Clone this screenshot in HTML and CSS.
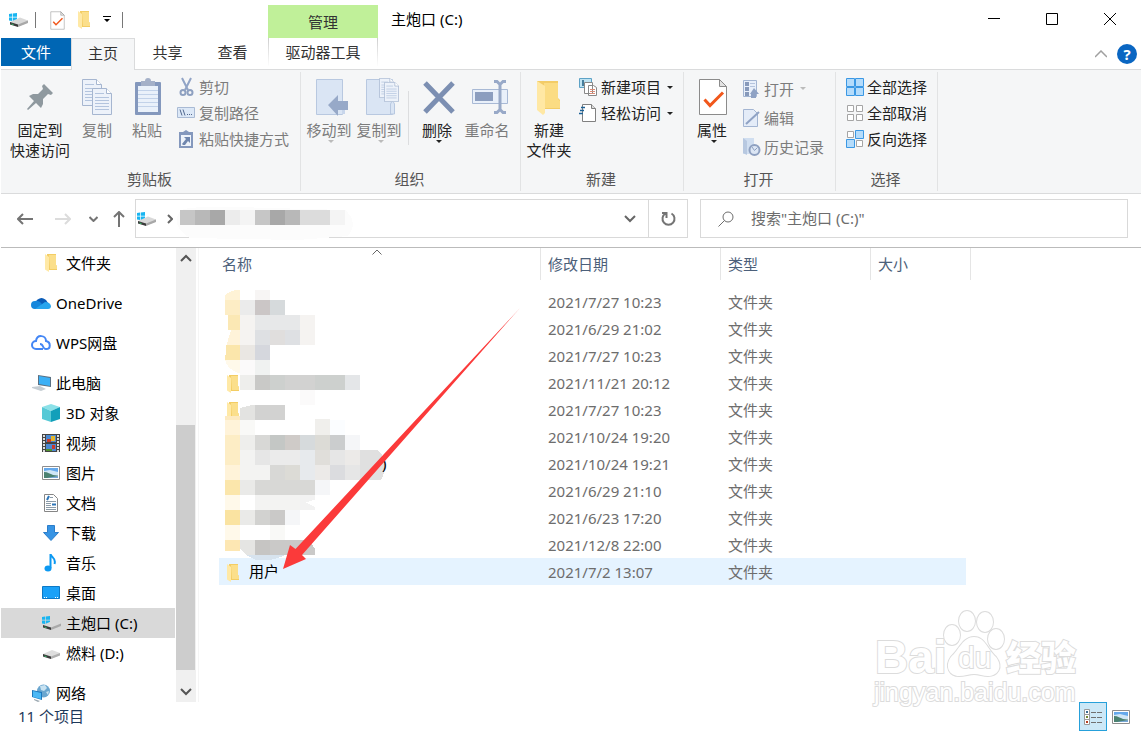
FILE: index.html
```html
<!DOCTYPE html>
<html lang="zh-CN">
<head>
  <meta charset="UTF-8">
  <meta name="viewport" content="width=device-width, initial-scale=1.0">
  <title>主炮口 (C:)</title>
  <link rel="stylesheet" href="styles.css">
</head>
<body>
  <!-- shared icons -->
  <svg class="defs" aria-hidden="true">
    <symbol id="i-drive" viewBox="0 0 20 18">
      <path fill="#19b5f1" d="M1 3l3-.5v3.300H1zM4.700 2.400L9 2v3.800H4.700zM1 6.600h3V10l-3-.5zM4.700 6.600H9v3.900l-4.300-.4z"/>
      <path fill="#d9d9d9" d="M2 11l10-4.500 8 3v2l-10 4-8-2z"/>
      <path fill="#a8a8a8" d="M10 13.500l10-4v2.500l-10 4z"/>
      <path fill="#3a3a3a" d="M2 11l8 2.500V16l-8-2.500z"/>
      <path stroke="#35c26b" d="M3.500 13l2 .6"/>
    </symbol>
    <symbol id="i-disk" viewBox="0 0 20 18">
      <path fill="#dedede" d="M2 10l9-4 8 3v2l-9 4-8-2z"/>
      <path fill="#b0b0b0" d="M10 12.500l9-3.500v2.500L10 15z"/>
      <path fill="#3a3a3a" d="M2 10l8 2.500V15l-8-2.500z"/>
      <path stroke="#35c26b" d="M3.500 12l2 .6"/>
    </symbol>
    <symbol id="i-folder" viewBox="0 0 16 18">
      <path fill="#f3cd64" d="M4 0h9v11l1 1v4H4z"/>
      <path fill="#fbdf8b" d="M6 1h7v10l1 1v3H7z"/>
      <path fill="#ffe9a6" d="M2 0l4 3v15l-4-2.500z"/>
    </symbol>
    <symbol id="i-check" viewBox="0 0 30 38">
      <path fill="#fff" stroke="#8b8b8b" d="M1.500 1.500h20l7 7v28h-27z"/>
      <path fill="#e3e3e3" stroke="#8b8b8b" d="M21.500 1.500v7h7z"/>
      <path fill="none" stroke="#f1571b" stroke-width="3" d="M6.500 21.500l5.500 6 13-13"/>
    </symbol>
    <symbol id="i-page" viewBox="0 0 20 27">
      <path fill="#edf2fa" stroke="#a6b6d0" d="M.5.5h14l5 5v21H.5z"/>
      <path fill="#fff" stroke="#a6b6d0" d="M14.500.5v5h5"/>
      <path stroke="#b3c4de" d="M3 5.500h9M3 9.500h14M3 12.500h14M3 15.500h14M3 18.500h14M3 21.500h14"/>
    </symbol>
    <symbol id="i-picture" viewBox="0 0 18 14">
      <path fill="#fff" stroke="#8d8d8d" d="M.5.5h17v13H.5z"/>
      <path fill="#65a9ec" d="M2 2h14v5H2z"/>
      <path fill="#cfe6f6" d="M2 5l6-1 8 2v3H2z"/>
      <path fill="#4b8271" d="M2 6c4 0 6 2 9 3l5 .5V12H2z"/>
      <path fill="#79a8d8" d="M5 12l11-2v2z"/>
    </symbol>
  </svg>

  <header class="titlebar">
    <div class="quick">
      <svg class="q-drive" width="20" height="18"><use href="#i-drive"/></svg>
      <i class="q-line"></i>
      <button type="button" aria-label="属性"><svg width="15" height="19"><use href="#i-check"/></svg></button>
      <button type="button" aria-label="新建文件夹"><svg width="16" height="18"><use href="#i-folder"/></svg></button>
      <button type="button" aria-label="自定义快速访问工具栏"><svg width="8" height="8" viewBox="0 0 8 8"><path d="M0 0h8v1H0zM1 3h6L4 6z"/></svg></button>
      <i class="q-line"></i>
    </div>
    <div class="context-title">管理</div>
    <div class="window-title">主炮口 (C:)</div>
    <div class="window-buttons">
      <button type="button" aria-label="最小化"><svg width="12" height="12"><path stroke="#000" d="M0 5.500h12"/></svg></button>
      <button type="button" aria-label="最大化"><svg width="12" height="12"><path fill="none" stroke="#000" d="M.5.5h11v11H.5z"/></svg></button>
      <button type="button" aria-label="关闭"><svg width="12" height="12"><path stroke="#000" d="M0 0l12 12M12 0L0 12"/></svg></button>
    </div>
  </header>

  <nav class="tabs">
    <button type="button" class="tab tab-file">文件</button>
    <button type="button" class="tab tab-active">主页</button>
    <button type="button" class="tab">共享</button>
    <button type="button" class="tab">查看</button>
    <button type="button" class="tab tab-context">驱动器工具</button>
    <div class="tabs-right">
      <button type="button" aria-label="折叠功能区"><svg width="12" height="8"><path fill="none" stroke="#a0a0a0" stroke-width="1.500" d="M0 7l6-6 6 6"/></svg></button>
      <button type="button" class="help" aria-label="帮助">?</button>
    </div>
  </nav>

  <section class="ribbon">
    <div class="group">
      <div class="group-body g-clip">
        <button type="button" class="big wide">
          <svg width="36" height="38" viewBox="0 0 36 38"><path fill="#8f999f" d="M22 6l9 9-2 2-3-1-5 5v5l-2 4-5-5-8 7-1-1 7-8-5-5 4-2h5l5-5-1-3z"/></svg>
          <span>固定到<br>快速访问</span>
        </button>
        <button type="button" class="big" disabled>
          <svg width="32" height="38"><use href="#i-page" y="1" width="20" height="27"/><use href="#i-page" x="10" y="10" width="20" height="27"/></svg>
          <span>复制</span>
        </button>
        <button type="button" class="big" disabled>
          <svg width="28" height="38" viewBox="0 0 28 38"><rect x="1" y="4" width="26" height="33" rx="1" fill="#8498bd"/><path fill="#eaf1fa" d="M4 8h20v26H4z"/><path stroke="#c2d2e9" d="M4 12.500h20M4 16.500h20M4 20.500h20M4 24.500h20M4 28.500h20"/><path fill="#a4b0c8" d="M7 3h4a3 3 0 0 1 6 0h4v5H7z"/></svg>
          <span>粘贴</span>
        </button>
        <div class="small-list">
          <button type="button" class="small" disabled>
            <svg width="20" height="20" viewBox="0 0 20 20"><path fill="none" stroke="#91a4c6" stroke-width="2" d="M5 1l6 12M14 1L8 13"/><g fill="none" stroke="#8ea0c0" stroke-width="2"><circle cx="6" cy="15.500" r="2.500"/><circle cx="13" cy="15.500" r="2.500"/></g></svg>剪切</button>
          <button type="button" class="small" disabled>
            <svg width="20" height="20" viewBox="0 0 20 20"><path fill="#dce8f7" stroke="#a9bad4" d="M.5 4.500h17v10H.5z"/><path stroke="#52698f" d="M3 6.500l2 6M6 6.500l2 6M10 11.500h1M12 11.500h1M14 11.500h1"/></svg>复制路径</button>
          <button type="button" class="small" disabled>
            <svg width="20" height="20" viewBox="0 0 20 20"><path fill="#8498bd" d="M2 3h4l3-2 3 2h4v16H2z"/><path fill="#eef3fa" d="M4 6h10v11H4z"/><path fill="#6f86ae" d="M7 8h6v6l-2-2-3 4H6l-1-1 4-5z"/></svg>粘贴快捷方式</button>
        </div>
      </div>
      <div class="group-name">剪贴板</div>
    </div>

    <div class="group">
      <div class="group-body g-organize">
        <button type="button" class="big" disabled>
          <svg width="34" height="38" viewBox="0 0 34 38"><path fill="#dae5f4" stroke="#b8c8e0" d="M1.500 1.500h26v35h-26z"/><path fill="#c8d6eb" d="M27 24h3v12h-3z"/><path fill="#97a9c8" d="M13 27l10-10v6h10v9H23v6z"/></svg>
          <span>移动到</span><i class="arrow"></i>
        </button>
        <button type="button" class="big" disabled>
          <svg width="34" height="38" viewBox="0 0 34 38"><path fill="#dae5f4" stroke="#b8c8e0" d="M1.500 1.500h26v35h-26z"/><path fill="#dae5f4" stroke="#b8c8e0" d="M25.500 36v-10q2-5 4 0v10z"/><use href="#i-page" x="14" width="15" height="20"/><use href="#i-page" x="19" y="4" width="15" height="20"/></svg>
          <span>复制到</span><i class="arrow"></i>
        </button>
        <i class="divider"></i>
        <button type="button" class="big">
          <svg width="34" height="38" viewBox="0 0 34 38"><path stroke="#7c8fb2" stroke-width="5" d="M2 5l28 29M30 5L2 34"/></svg>
          <span>删除</span><i class="arrow"></i>
        </button>
        <button type="button" class="big" disabled>
          <svg width="36" height="38" viewBox="0 0 36 38"><path fill="#e9f0fa" stroke="#a8b9d5" d="M.5 11.500h35v14H.5z"/><path fill="#8c9ebf" d="M3 14h18v9H3z"/><path fill="none" stroke="#98a9c8" stroke-width="3" d="M22 3.500h3l3 3 3-3h3M28 6v27M22 34.500h3l3-3 3 3h3"/></svg>
          <span>重命名</span>
        </button>
      </div>
      <div class="group-name">组织</div>
    </div>

    <div class="group">
      <div class="group-body g-new">
        <button type="button" class="big">
          <svg width="28" height="38" viewBox="0 0 28 38"><path fill="#f3cc67" d="M2 3h21v17l2 2v9H2z"/><path fill="#fbdc83" d="M9 5h14v16l2 2v7H9z"/><path fill="#ffe8a4" d="M2 3l8 5v27l-2 2-6-5z"/></svg>
          <span>新建<br>文件夹</span>
        </button>
        <div class="small-list">
          <button type="button" class="small">
            <svg width="20" height="20" viewBox="0 0 20 20"><path fill="#bfe3f2" stroke="#5da2c6" d="M.5 1.500h12v9H.5z"/><path fill="#477f9d" d="M3 3h2v6H3z"/><path fill="#fff" stroke="#888" d="M5.500 5.500h8v11h-8zM9.500 8.500h5l3 2v8h-8z"/><path stroke="#d98d79" d="M11 12.500h5M11 14.500h5M11 16.500h5"/></svg>新建项目<i class="caret"></i></button>
          <button type="button" class="small">
            <svg width="20" height="20" viewBox="0 0 20 20"><path fill="#fff" stroke="#808080" d="M3.500 1.500h9l4 4v13h-13z"/><path fill="#ddd" stroke="#808080" d="M12.500 1.500v4h4"/><path stroke="#1d6296" stroke-width="1.500" d="M2 4.500h4M1 7.500h4M0 10.500h4"/></svg>轻松访问<i class="caret"></i></button>
        </div>
      </div>
      <div class="group-name">新建</div>
    </div>

    <div class="group">
      <div class="group-body g-open">
        <button type="button" class="big">
          <svg width="30" height="38"><use href="#i-check"/></svg>
          <span>属性</span><i class="arrow"></i>
        </button>
        <div class="small-list tall">
          <button type="button" class="small" disabled>
            <svg width="20" height="20" viewBox="0 0 20 20"><path fill="#e8effa" stroke="#a3b5d2" d="M1.500 1.500h13v16h-13z"/><path fill="#8799ba" d="M3 3h4v4H3zM3 8h4v4H3zM3 13h4v4H3z"/><path stroke="#b5c4dd" d="M8 4.500h5M8 7.500h5"/><path fill="#8fa2c4" d="M12 9l5 6h-3v4h-5v-4H8z"/></svg>打开<i class="caret"></i></button>
          <button type="button" class="small" disabled>
            <svg width="20" height="20" viewBox="0 0 20 20"><path fill="#e4ecf8" stroke="#a3b5d2" d="M1.500 1.500h10l4 4v13h-14z"/><path stroke="#8fa2c4" stroke-width="2" d="M4 16L17 4"/></svg>编辑</button>
          <button type="button" class="small" disabled>
            <svg width="20" height="20" viewBox="0 0 20 20"><path fill="#d0def0" d="M1 1h11v16H1z"/><path fill="#b7c8e0" d="M1 1l4 3v14l-4-2z"/><circle cx="12.500" cy="13" r="5" fill="#dce6f4" stroke="#8ea0c0" stroke-width="2"/><path fill="none" stroke="#8ea0c0" d="M10 10l2.500 3.500 3-3"/></svg>历史记录</button>
        </div>
      </div>
      <div class="group-name">打开</div>
    </div>

    <div class="group">
      <div class="group-body g-select">
        <div class="small-list">
          <button type="button" class="small">
            <svg width="20" height="20" viewBox="0 0 20 20"><path fill="#b5dcfb" stroke="#3b98e4" d="M1.500 1.500h8v8h-8zM10.500 1.500h8v8h-8zM1.500 10.500h8v8h-8zM10.500 10.500h8v8h-8z"/></svg>全部选择</button>
          <button type="button" class="small">
            <svg width="20" height="20" viewBox="0 0 20 20"><path fill="#fff" stroke="#a5a5a5" d="M2.500 2.500h6v6h-6zM11.500 2.500h6v6h-6zM2.500 11.500h6v6h-6zM11.500 11.500h6v6h-6z"/></svg>全部取消</button>
          <button type="button" class="small">
            <svg width="20" height="20" viewBox="0 0 20 20"><path fill="#fff" stroke="#a5a5a5" d="M2.500 2.500h6v6h-6zM11.500 11.500h6v6h-6z"/><path fill="#b5dcfb" stroke="#3b98e4" d="M10.500 1.500h8v8h-8zM1.500 10.500h8v8h-8z"/></svg>反向选择</button>
        </div>
      </div>
      <div class="group-name">选择</div>
    </div>
  </section>

  <section class="location">
    <div class="history">
      <button type="button" aria-label="后退"><svg width="16" height="12"><path fill="none" stroke="#747474" stroke-width="2" d="M16 6H1M6 1L1 6l5 5"/></svg></button>
      <button type="button" aria-label="前进" disabled><svg width="16" height="12"><path fill="none" stroke="#dcdcdc" stroke-width="2" d="M0 6h15M10 1l5 5-5 5"/></svg></button>
      <button type="button" class="recent" aria-label="最近位置"><svg width="9" height="6"><path fill="none" stroke="#747474" stroke-width="2" d="M.5 1l4 4 4-4"/></svg></button>
      <button type="button" class="up" aria-label="上移"><svg width="12" height="16"><path fill="none" stroke="#747474" stroke-width="2" d="M6 16V1M1 6l5-5 5 5"/></svg></button>
    </div>
    <div class="address">
      <svg width="20" height="18"><use href="#i-drive"/></svg>
      <svg class="crumb" width="6" height="10"><path fill="none" stroke="#666" stroke-width="2" d="M1 1l4 4-4 4"/></svg>
      <svg class="address-blur" width="180" height="36" viewBox="0 0 180 36" shape-rendering="crispEdges">
        <path fill="#fcfcfc" d="M5 5Q10 0 60 1l110 3q14 12 3 26l-50 4-108-2Q-5 20 5 5z"/>
        <path fill="#c6c6c6" d="M5 4h15v15H5zM80 4h15v15H80z"/>
        <path fill="#b8b8b8" d="M20 4h15v15H20zM110 4h15v15h-15z"/>
        <path fill="#a8a8a8" d="M35 4h15v15H35zM95 4h15v15H95z"/>
        <path fill="#ececec" d="M50 4h15v15H50z"/>
        <path fill="#f4f4f4" d="M65 4h15v15H65zM155 4h15v15h-15z"/>
        <path fill="#dcdcdc" d="M125 4h30v15h-30z"/>
      </svg>
      <button type="button" class="drop" aria-label="展开"><svg width="12" height="8"><path fill="none" stroke="#666" stroke-width="2" d="M1 1l5 5 5-5"/></svg></button>
      <button type="button" class="refresh" aria-label="刷新"><svg width="16" height="16" viewBox="0 0 16 16"><path fill="none" stroke="#747474" stroke-width="2" d="M11.500 2.500a6 6 0 1 1-6 0M2 2h4.500v5"/></svg></button>
    </div>
    <label class="search">
      <svg width="16" height="16" viewBox="0 0 16 16"><g fill="none" stroke="#6d6d6d"><circle cx="10" cy="6" r="5"/><path d="M6.500 9.500L.5 15.500"/></g></svg>
      <input type="text" aria-label="搜索" placeholder="搜索&quot;主炮口 (C:)&quot;">
    </label>
  </section>

  <main class="main">
    <ul class="tree">
      <li class="sub gap"><svg width="18" height="18" viewBox="0 0 16 18"><use href="#i-folder"/></svg>文件夹</li>
      <li class="gap"><svg width="20" height="18" viewBox="0 0 20 18"><path fill="#0a5cb8" d="M5 8a6 6 0 0 1 10-2l2 3-6 3z"/><path fill="#1687dc" d="M4 15a4 4 0 0 1 0-8q4-1 7 3l-3 5z"/><path fill="#27a5ee" d="M4 15L14 8q5 0 6 4 0 3-3 3z"/></svg>OneDrive</li>
      <li class="gap"><svg width="20" height="18" viewBox="0 0 20 18"><path fill="none" stroke="#4386f5" stroke-width="2" d="M12 15H5a4 4 0 0 1 0-8c1-7 10-6 10 0 5 1 5 8 0 8-4 0-2-5-6-5"/></svg>WPS网盘</li>
      <li><svg width="20" height="18" viewBox="0 0 20 18"><path fill="#5b7082" d="M7 1l13 2v10L7 11z"/><path fill="#3bb0f6" d="M8 2l11 2v8L8 10z"/><path fill="#c5cdd3" d="M1 13l8-1 6 3-5 2-9-3z"/></svg>此电脑</li>
      <li class="sub"><svg width="18" height="18" viewBox="0 0 18 18"><path fill="#8ce1e8" d="M0 3l9-3 9 3-9 4z"/><path fill="#56c9d6" d="M0 3l9 4v11l-9-3z"/><path fill="#129fba" d="M18 3L9 7v11l9-3z"/></svg>3D 对象</li>
      <li class="sub"><svg width="18" height="18" viewBox="0 0 18 18"><path fill="#444" d="M0 0h18v18H0z"/><path stroke="#ddd" stroke-width="2" stroke-dasharray="2 1" d="M2 1v17M16 1v17"/><path fill="#4b89d2" d="M4 1h10v7H4zM4 10h10v7H4z"/><path fill="#e4b62c" d="M9 2h4v5H9z"/><path fill="#c83b2c" d="M5 5h4v3H5zM10 11h3v4h-3z"/><path fill="#51902f" d="M4 15h6v2H4z"/></svg>视频</li>
      <li class="sub"><svg width="18" height="14"><use href="#i-picture"/></svg>图片</li>
      <li class="sub"><svg width="18" height="18" viewBox="0 0 18 18"><path fill="#fff" stroke="#868686" d="M2.500.5h9l4 4v13h-13z"/><path stroke="#8b9ba8" d="M4 7.500h10M4 9.500h5M4 11.500h5M4 13.500h10M4 15.500h10M8 3.500h3"/><path stroke="#2d75b7" stroke-width="2" d="M5 6l2-4M10 10.500h4"/></svg>文档</li>
      <li class="sub"><svg width="18" height="18" viewBox="0 0 18 18"><path fill="#3794e4" stroke="#2b7dca" d="M5.500 1.500h7v7h4L9 16.500 1.500 8.500h4z"/></svg>下载</li>
      <li class="sub"><svg width="18" height="18" viewBox="0 0 18 18"><ellipse cx="6" cy="14.500" rx="3.500" ry="3" fill="#0c99f2"/><path fill="none" stroke="#0c99f2" stroke-width="2" d="M8.500 14V0c1 4 6 4 4 10"/></svg>音乐</li>
      <li class="sub"><svg width="18" height="14" viewBox="0 0 18 14"><path fill="#1aa1f8" stroke="#0d79c6" d="M.5.5h17v12H.5z"/><path stroke="#fff" stroke-dasharray="1 1" d="M2 11.500h3M13 11.500h3"/></svg>桌面</li>
      <li class="sub selected"><svg width="20" height="18"><use href="#i-drive"/></svg>主炮口 (C:)</li>
      <li class="sub gap"><svg width="20" height="18"><use href="#i-disk"/></svg>燃料 (D:)</li>
      <li><svg width="20" height="18" viewBox="0 0 20 18"><circle cx="12.500" cy="7" r="6.500" fill="#6aa6cf"/><path fill="#c8e2f1" d="M9 2l5-1 2 3-3 3-3-1zM15 8l3-1-1 4z"/><path fill="#1d78bd" d="M1 6l10 2v8L1 13z"/><path fill="#4bb8f5" d="M2 7l8 2v6l-8-2z"/><path fill="#9aa7b0" d="M3 15l6 2-2 1-4-2z"/></svg>网络</li>
    </ul>
    <div class="scroll">
      <svg width="20" height="20"><path fill="none" stroke="#555" stroke-width="2" d="M5 13l5-5 5 5"/></svg>
      <div class="scroll-track"><div class="scroll-thumb"></div></div>
      <svg width="20" height="20"><path fill="none" stroke="#555" stroke-width="2" d="M5 7l5 5 5-5"/></svg>
    </div>

    <div class="files">
      <table class="file-table">
        <thead>
          <tr>
            <th class="col-name">名称<svg class="sort" width="10" height="6"><path fill="none" stroke="#666" d="M.5 5.500L5 1l4.500 4.500"/></svg></th>
            <th class="col-date">修改日期</th>
            <th class="col-type">类型</th>
            <th class="col-size">大小</th>
          </tr>
        </thead>
        <tbody>
          <tr><td></td><td>2021/7/27 10:23</td><td>文件夹</td><td></td></tr>
          <tr><td></td><td>2021/6/29 21:02</td><td>文件夹</td><td></td></tr>
          <tr><td></td><td>2021/7/27 10:23</td><td>文件夹</td><td></td></tr>
          <tr><td><svg width="16" height="18"><use href="#i-folder"/></svg></td><td>2021/11/21 20:12</td><td>文件夹</td><td></td></tr>
          <tr><td><svg width="16" height="18"><use href="#i-folder"/></svg></td><td>2021/7/27 10:23</td><td>文件夹</td><td></td></tr>
          <tr><td></td><td>2021/10/24 19:20</td><td>文件夹</td><td></td></tr>
          <tr><td></td><td>2021/10/24 19:21</td><td>文件夹</td><td></td></tr>
          <tr><td></td><td>2021/6/29 21:10</td><td>文件夹</td><td></td></tr>
          <tr><td></td><td>2021/6/23 17:20</td><td>文件夹</td><td></td></tr>
          <tr><td></td><td>2021/12/8 22:00</td><td>文件夹</td><td></td></tr>
          <tr class="selected"><td><svg width="16" height="18"><use href="#i-folder"/></svg>用户</td><td>2021/7/2 13:07</td><td>文件夹</td><td></td></tr>
        </tbody>
      </table>

      <!-- pixelated names, one unit per block -->
      <svg class="mosaic" width="180" height="285" viewBox="0 0 12 19" shape-rendering="crispEdges" aria-hidden="true">
        <path fill="#fff3d6" d="M0 .7Q.2.400 1 .3V1H0z"/>
        <path fill="#f7f5f4" d="M2 .3h1V1H2z"/>
        <path fill="#fdedc5" d="M0 1h1v1H0zM0 10h1v2H0z"/>
        <path fill="#ebebeb" d="M1 1h1v1H1zM3 11h2v1H3z"/>
        <path fill="#cbc6c6" d="M2 1h1v1H2z"/>
        <path fill="#d6dadc" d="M3 1h1v1H3zM5 10h1v1H5z"/>
        <path fill="#fbe8b4" d="M.2 2H1v1H.2z"/>
        <path fill="#f5f3f1" d="M1 2h1v2H1zM5 2h1v2H5z"/>
        <path fill="#e7e8e9" d="M2 2h3v1H2z"/>
        <path fill="#fff3d9" d="M.4 3H1v1H.1zM0 9h1v1H0zM0 12h1v1H0z"/>
        <path fill="#dee0e3" d="M2 3h1v1H2zM4 3h1v1H4z"/>
        <path fill="#e0dedd" d="M3 3h1v1H3z"/>
        <path fill="#fbe6ab" d="M.1 4H1v1H0zM0 13h1v1H0z"/>
        <path fill="#eae7e3" d="M1 4h1v1H1z"/>
        <path fill="#d5d7dd" d="M2 4h1v1H2z"/>
        <path fill="#fff9ea" d="M0 5h1v.9Q.2 5.700 0 5zM0 14h1v1H0zM0 16h1v1H0z"/>
        <path fill="#fbfafa" d="M1 5h1v1H1zM5 7h1v1H5z"/>
        <path fill="#f0f2f1" d="M2 5h1v1H2z"/>
        <path fill="#eeeeec" d="M1 6h1v1H1zM1 10h1v1H1z"/>
        <path fill="#c9c9c7" d="M2 6h1v1H2z"/>
        <path fill="#cdd0ce" d="M3 6h1v1H3zM6 6h2v1H6z"/>
        <path fill="#d2d2d1" d="M4 6h2v1H4zM2 8h2v1H2z"/>
        <path fill="#e4e6e8" d="M8 6h1v1H8z"/>
        <path fill="#fdeac0" d="M0 8.700h1V9H0z"/>
        <path fill="#e3e3e1" d="M1 8.200L1.800 8H2v1H1z"/>
        <path fill="#f9f9f7" d="M1 9h1v1H1zM3 16h1v1H3z"/>
        <path fill="#f0efec" d="M6 8.900h1V10H6z"/>
        <path fill="#fbfdff" d="M7 9h1v1H7z"/>
        <path fill="#d8d8d6" d="M2 10h1v1H2zM3 12h1v1H3zM2 13h4v1H2z"/>
        <path fill="#c4c7c5" d="M3 10h1v1H3z"/>
        <path fill="#cfcbc8" d="M4 10h1v1H4z"/>
        <path fill="#dcdbd6" d="M6 10h1v1H6zM4 12h1v1H4z"/>
        <path fill="#cbcdce" d="M7 10h1v1H7z"/>
        <path fill="#f5f6f8" d="M8 10h1v1H8zM6 13h1v1H6zM4 15h1v1H4z"/>
        <path fill="#f3f3f2" d="M1 11h1v2H1zM2 12h1v1H2zM2 14h3v1H2z"/>
        <path fill="#e6e6e6" d="M2 11h1v1H2zM7 11h1v1H7zM8 12h1v1H8z"/>
        <path fill="#e7eaed" d="M5 11h1v2H5z"/>
        <path fill="#e0deda" d="M6 11h1v1H6z"/>
        <path fill="#eceae8" d="M6 12h1v1H6zM8 11h1v1H8z"/>
        <path fill="#dbdcdf" d="M7 12h1v1H7z"/>
        <path fill="#e0e0e0" d="M9 11h1.200q.8.800.2 2H9z"/>
        <path fill="#eaeae8" d="M1 13h1v1H1zM1 15h1v1H1z"/>
        <path fill="#f2f2f2" d="M5 14h1v.3l-.6.200.6.3V15H5z"/>
        <path fill="#fae3a1" d="M0 15h1v1H0z"/>
        <path fill="#d2d2d0" d="M2 15h1v1H2z"/>
        <path fill="#cac9c8" d="M3 15h1v1H3zM3 17h2v1H3zM5 17h.6l.4.600V18H5z"/>
        <path fill="#fde7b3" d="M0 17h1v.7H0z"/>
        <path fill="#e5e5e3" d="M1 17h1v1h-.6L1 17.600z"/>
        <path fill="#c6c5c3" d="M2 17h1v1H2z"/>
        <path fill="#d7e3ee" d="M1.400 18H4q-1 .5-2 .3z"/>
      </svg>
      <svg class="pointer" width="330" height="330" viewBox="0 0 330 330" aria-hidden="true">
        <text class="leftover" x="183" y="221">)</text>
        <path fill="#fb3a3a" d="M84 321l7-24 5.500 4L321 60 103 307l4 4z"/>
      </svg>
      <svg class="watermark" width="220" height="110" viewBox="0 0 220 110" aria-hidden="true">
        <text class="wm-logo" x="6" y="70">Bai</text>
        <g class="wm-paw">
          <ellipse cx="83" cy="32" rx="8" ry="10"/>
          <ellipse cx="98" cy="18" rx="8" ry="10"/>
          <ellipse cx="116" cy="19" rx="8" ry="10"/>
          <ellipse cx="127" cy="36" rx="8" ry="10"/>
          <path d="M105 34c11 0 13 12 22 20 8 11 1 19-8 19-5 0-9-2-14-2s-9 2-15 2c-9 0-15-9-8-19 8-7 12-20 23-20z"/>
        </g>
        <text class="wm-du" x="89" y="65">du</text>
        <text class="wm-cn" x="137" y="68">经验</text>
        <text class="wm-url" x="5" y="98">jingyan.baidu.com</text>
      </svg>
    </div>
  </main>

  <footer class="status">
    <span class="count">11 个项目</span>
    <button type="button" class="view view-on" aria-label="详细信息"><svg width="20" height="18" viewBox="0 0 20 18"><path fill="#fff" stroke="#999" d="M1.500 1.500h5v5h-5zM1.500 6.500h5v5h-5zM1.500 11.500h5v5h-5z"/><path fill="#396b91" d="M3 3h2v2H3z"/><path fill="#718831" d="M3 8h2v2H3z"/><path fill="#b83e20" d="M3 13h2v2H3z"/><path stroke="#707070" d="M8 4.500h5M14 4.500h5M8 9.500h5M14 9.500h5M8 14.500h5M14 14.500h5"/></svg></button>
    <button type="button" class="view" aria-label="大缩略图"><svg width="18" height="14"><use href="#i-picture"/></svg></button>
  </footer>
</body>
</html>
```

FILE: styles.css
```css
* {
  box-sizing: border-box;
}
body {
  margin: 0;
  height: 100vh;
  display: flex;
  flex-direction: column;
  overflow: hidden;
  background: #fff;
  color: #000;
  font-family: "Noto Sans", "Noto Sans CJK SC", sans-serif;
  font-size: 15px;
  line-height: 20px;
}
button {
  padding: 0;
  border: none;
  background: none;
  color: inherit;
  font: inherit;
}
svg {
  display: block;
  flex: none;
}
.defs {
  position: absolute;
  width: 0;
  height: 0;
}

/* title bar */
.titlebar {
  display: flex;
  height: 38px;
}
.quick {
  display: flex;
  align-items: center;
  gap: 11px;
  width: 268px;
  padding: 2px 0 0 8px;
}
.quick .q-drive {
  margin-right: -4px;
}
.q-line {
  width: 1px;
  height: 16px;
  margin-right: 3px;
  background: #777;
}
.context-title {
  width: 110px;
  margin-top: 5px;
  background: #c0f099;
  color: #333;
  line-height: 35px;
  text-align: center;
}
.window-title {
  flex: 1;
  padding-left: 13px;
  line-height: 38px;
}
.window-buttons {
  display: flex;
  padding-right: 2px;
}
.window-buttons button {
  display: flex;
  align-items: center;
  justify-content: center;
  width: 58px;
}

/* tabs */
.tabs {
  display: flex;
  height: 31px;
  padding-left: 1px;
  color: #333;
}
.tab {
  width: 65px;
  height: 28px;
}
.tab-file {
  width: 70px;
  background: #0066b4;
  color: #fff;
}
.tab-active {
  position: relative;
  width: 64px;
  height: 32px;
  padding-bottom: 3px;
  border: 1px solid #dadbdc;
  border-bottom: none;
  background: #f5f6f7;
}
.tab-context {
  width: 110px;
  margin-left: 3px;
  border-left: 1px solid;
  border-right: 1px solid;
  border-image: linear-gradient(#ccc, #fff) 1;
}
.tabs-right {
  display: flex;
  align-items: center;
  gap: 10px;
  margin-left: auto;
  padding-right: 4px;
}
.help {
  width: 20px;
  height: 20px;
  border-radius: 50%;
  background: #0a66c2;
  color: #fff;
  font-weight: bold;
}

/* ribbon */
.ribbon {
  display: grid;
  grid-template-columns: 300px 220px 163px 152px 102px;
  height: 125px;
  margin-left: 1px;
  padding: 2px 0;
  border-top: 1px solid #dadbdc;
  border-bottom: 1px solid #dadbdc;
  background: #f5f6f7;
}
.group {
  display: flex;
  flex-direction: column;
  border-right: 1px solid #e2e3e4;
}
.group-body {
  flex: 1;
  display: flex;
  align-items: flex-start;
  padding: 2px 0 0 3px;
}
.g-clip {
  padding-left: 7px;
}
.g-select {
  padding-left: 4px;
}
.group-name {
  height: 21px;
  padding-right: 2px;
  color: #555;
  line-height: 19px;
  text-align: center;
}
.big {
  position: relative;
  display: flex;
  flex-direction: column;
  align-items: center;
  gap: 4px;
  width: 50px;
  padding-top: 4px;
  color: #222;
  white-space: nowrap;
}
.big.wide {
  width: 64px;
}
.g-clip .big:disabled svg {
  margin-left: 2px;
}
.g-organize .big svg {
  margin-left: 6px;
}
.g-open .big svg {
  margin-left: 2px;
}
.big:disabled,
.small:disabled {
  color: #7c7c7c;
}
.arrow,
.caret {
  border: 3px solid transparent;
  border-top-color: #222;
  border-bottom: none;
}
.arrow {
  position: absolute;
  left: 24px;
  bottom: -3px;
}
.caret {
  margin-left: 4px;
}
:disabled .arrow,
:disabled .caret {
  border-top-color: #bbb;
}
.divider {
  width: 1px;
  height: 54px;
  margin: 17px 3px 0 4px;
  background: #dcdddf;
}
.small-list {
  display: flex;
  flex-direction: column;
  padding-left: 5px;
}
.small {
  display: flex;
  align-items: center;
  gap: 2px;
  height: 26px;
  color: #222;
  white-space: nowrap;
}
.tall .small {
  height: 29px;
}

/* address bar */
.location {
  display: grid;
  grid-template-columns: 123px 553fr 428fr;
  gap: 12px;
  height: 53px;
  padding: 5px 13px 9px 0;
}
.history {
  display: flex;
  align-items: center;
  padding-left: 17px;
}
.history button {
  margin-right: 22px;
}
.history .recent {
  margin-left: -4px;
  margin-right: 15px;
}
.history .up {
  margin: 0;
}
.address {
  position: relative;
  display: flex;
  align-items: center;
  border: 1px solid #d9d9d9;
}
.crumb {
  margin-left: 11px;
}
.address-blur {
  position: absolute;
  left: 39px;
  top: 6px;
}
.drop {
  margin-left: auto;
  padding: 10px 12px;
}
.refresh {
  display: flex;
  align-items: center;
  align-self: stretch;
  padding: 0 11px;
  border-left: 1px solid #d9d9d9;
}
.search {
  display: flex;
  align-items: center;
  gap: 16px;
  padding-left: 17px;
  border: 1px solid #d9d9d9;
}
.search input {
  flex: 1;
  min-width: 0;
  padding: 0 0 2px 1px;
  border: none;
  outline: none;
  font: inherit;
}
.search input::placeholder {
  color: #6d6d6d;
}

/* navigation pane */
.main {
  flex: 1;
  display: flex;
  min-height: 0;
  margin-left: 1px;
  border-top: 1px solid #bbb;
}
.tree {
  flex: none;
  width: 175px;
  margin: 0;
  padding: 0;
  list-style: none;
}
.tree li {
  display: flex;
  align-items: center;
  gap: 5px;
  height: 30px;
  padding-left: 30px;
}
.tree .sub {
  padding-left: 40px;
}
.tree svg[width="18"] {
  margin: 0 1px;
}
.tree .gap {
  margin-bottom: 10px;
}
.tree .selected {
  width: 174px;
  background: #d9d9d9;
}
.scroll {
  flex: none;
  display: flex;
  flex-direction: column;
  width: 20px;
  background: #f0f0f0;
}
.scroll-track {
  flex: 1;
  display: flex;
  align-items: flex-end;
  padding-bottom: 12px;
}
.scroll-thumb {
  width: 19px;
  height: 61%;
  background: #cdcdcd;
}

/* file list */
.files {
  position: relative;
  flex: 1;
  margin-left: 2px;
  padding-left: 20px;
  border-left: 1px solid #f5f5f5;
}
.file-table {
  width: 752px;
  table-layout: fixed;
  border-collapse: separate;
  border-spacing: 0;
}
.file-table th {
  position: relative;
  height: 32px;
  padding: 0 7px;
  border-right: 1px solid #e5e5e5;
  color: #4c607a;
  font-weight: normal;
  text-align: left;
}
.file-table .col-name {
  width: 322px;
  padding-left: 3px;
}
.col-date {
  width: 180px;
}
.col-type {
  width: 150px;
}
.sort {
  position: absolute;
  left: 153px;
  top: 1px;
}
.file-table tbody::before {
  content: "";
  display: block;
  height: 8px;
}
.file-table td {
  height: 27px;
  padding: 0 7px;
  color: #6d6d6d;
}
.file-table td:first-child {
  padding-left: 6px;
  color: #000;
}
.file-table td:last-child {
  border-right: 5px solid transparent;
  background-clip: padding-box;
}
.file-table td svg {
  display: inline-block;
  margin-right: 8px;
  vertical-align: middle;
}
.file-table .selected td {
  background-color: #e5f3ff;
}
.mosaic {
  position: absolute;
  left: 26px;
  top: 37px;
}
.pointer {
  position: absolute;
  left: 0;
  top: 0;
}
.watermark {
  position: absolute;
  right: 52px;
  bottom: -11px;
  fill: #fff;
  stroke: #dcdcdc;
  stroke-width: 2px;
  paint-order: stroke;
}
.leftover {
  font-size: 15px;
}
.wm-logo,
.wm-du,
.wm-url {
  font-family: "Liberation Sans", Arial, sans-serif;
}
.wm-logo {
  font-size: 46px;
  font-weight: bold;
}
.wm-du {
  font-size: 30px;
}
.wm-cn {
  font-size: 35px;
  font-weight: 900;
}
.wm-url {
  font-size: 25px;
}

/* status bar */
.status {
  display: flex;
  height: 30px;
  padding: 0 9px 1px 18px;
  color: #1e395b;
}
.count {
  flex: 1;
  line-height: 28px;
}
.view {
  display: flex;
  align-items: center;
  justify-content: center;
  width: 22px;
}
.view-on {
  width: 28px;
  margin-right: 3px;
  border: 1px solid #26a0da;
  background: #cce8f7;
}
```
